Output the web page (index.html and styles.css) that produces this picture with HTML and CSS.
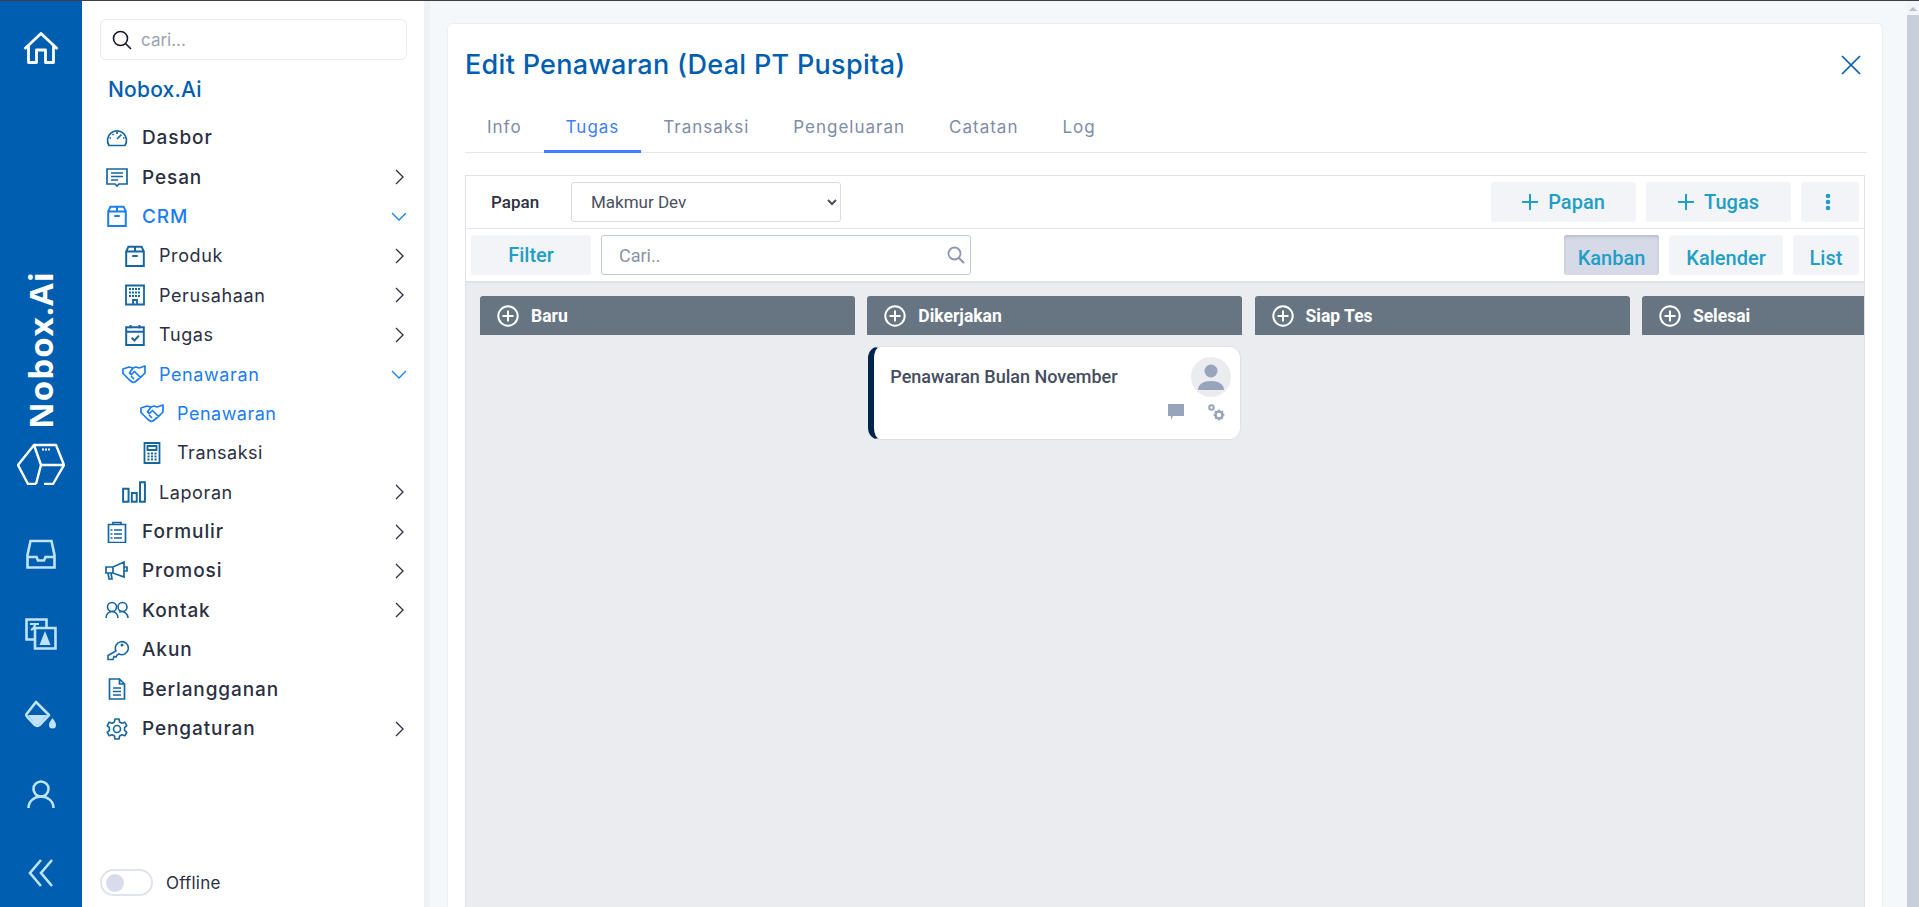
FILE: index.html
```html
<!DOCTYPE html>
<html>
  <head>
    <title>Edit Penawaran</title>
    <link rel="stylesheet" href="styles.css">
  </head>
  <body>
    <svg class="defs" width="0" height="0">
      <symbol id="i-right" viewBox="0 0 10 16"><path d="M2 1l7 7-7 7" fill="none" stroke="currentColor" stroke-width="1.300"/></symbol>
      <symbol id="i-down" viewBox="0 0 16 10"><path d="M1 2l7 7 7-7" fill="none" stroke="currentColor" stroke-width="1.300"/></symbol>
      <symbol id="i-box" viewBox="0 0 20 20"><path d="M2 6h16v13H2zM2 6l2-4.500h12L18 6M10 1.500V6M7.500 10h5" fill="none" stroke="currentColor" stroke-width="1.800"/></symbol>
      <symbol id="i-hand" viewBox="0 0 24 20"><path d="M1 5l6-2 4 1 3-1 3 1 6-2v7l-3 3-7 6-2 .5-3-2-4-4-3-3zM11 4L7.500 9l2 1.500 3-3 6 6M9 12l3 3" fill="none" stroke="currentColor" stroke-width="1.700" stroke-linejoin="round"/></symbol>
      <symbol id="i-plus" viewBox="0 0 22 22"><circle cx="11" cy="11" r="9.700" fill="none" stroke="#fff" stroke-width="2"/><path d="M5.500 11h11M11 5.500v11" stroke="#fff" stroke-width="2"/></symbol>
      <symbol id="i-add" viewBox="0 0 16 16"><path d="M0 8h16M8 0v16" stroke="currentColor" stroke-width="2"/></symbol>
    </svg>

    <div class="app">
      <aside class="rail">
        <svg class="rail-home" width="36" height="32" viewBox="0 0 36 32"><path d="M1.500 17L18 1.500 34.500 17M5.500 13.500V30.500H13.500V18h9v12.500h8V13.500" fill="none" stroke="#fff" stroke-width="2.800" stroke-linejoin="round"/></svg>
        <div class="rail-brand">Nobox.Ai</div>
        <svg class="rail-cube" width="48" height="42" viewBox="0 0 48 42"><path d="M17 2H39L47 22 36 41H27M19 41H11L1 22 17 2 24 22H47M24 22L19 41" fill="none" stroke="#fff" stroke-width="2.400" stroke-linejoin="round"/><path d="M25 6.500h9" stroke="#fff" stroke-width="2" stroke-dasharray="2 1"/></svg>
        <svg class="rail-icon rail-tray" width="30" height="30" viewBox="0 0 30 30"><path d="M4.500 2h21l3 14v12.500h-27V16zM1.500 18h9l1.500 3.500h6l1.500-3.500h9" fill="none" stroke="#bfe3fb" stroke-width="2.600"/></svg>
        <svg class="rail-icon" width="32" height="32" viewBox="0 0 32 32"><path d="M1.500 1.500h20v20h-20z" fill="none" stroke="#bfe3fb" stroke-width="2.600"/><path d="M10 10h20.500v20.500H10z" fill="#005eb0" stroke="#bfe3fb" stroke-width="2.600"/><path d="M5 6h9M10 6c0 3-2 5-4 6" fill="none" stroke="#bfe3fb" stroke-width="2.200"/><path d="M20 13l5.500 14h-11z" fill="#bfe3fb"/></svg>
        <svg class="rail-icon" width="32" height="32" viewBox="0 0 32 32"><path d="M11 3L24 16 14.500 26a3 3 0 0 1-4.500 0L2 17.500a2 2 0 0 1 0-3z" fill="none" stroke="#bfe3fb" stroke-width="2.600" stroke-linejoin="round"/><path d="M3 16h19l-8 9a3 3 0 0 1-4 0z" fill="#bfe3fb"/><path d="M27.500 19c2 3 3.500 4.500 3.500 7a3.500 3.500 0 0 1-7 0c0-2.500 1.500-4 3.500-7z" fill="#bfe3fb"/></svg>
        <svg class="rail-icon" width="28" height="30" viewBox="0 0 28 30"><circle cx="14" cy="9" r="7.500" fill="none" stroke="#bfe3fb" stroke-width="2.600"/><path d="M1.500 28c0-7 6-11.500 12.500-11.500S26.500 21 26.500 28" fill="none" stroke="#bfe3fb" stroke-width="2.600"/></svg>
        <svg class="rail-icon" width="26" height="28" viewBox="0 0 26 28"><path d="M13 1L2 14l11 13M24 1L13 14l11 13" fill="none" stroke="#bfe3fb" stroke-width="2.600"/></svg>
      </aside>

      <nav class="side">
        <div class="side-search">
          <svg width="20" height="20" viewBox="0 0 20 20"><circle cx="8.500" cy="8.500" r="7" fill="none" stroke="#111827" stroke-width="1.600"/><path d="M13.500 13.500L19 19" stroke="#111827" stroke-width="1.600"/></svg>
          <span>cari...</span>
        </div>
        <div class="side-title">Nobox.Ai</div>

        <ul class="menu">
          <li class="item">
            <svg class="ico" viewBox="0 0 22 22"><path d="M3 18.500a9.500 9.500 0 1 1 16 0zM11 5v2M5 11H3.500M18.500 11H17M6.500 7l1 1M15.500 7.500L11 12" fill="none" stroke="currentColor" stroke-width="1.700"/></svg>
            <span>Dasbor</span>
          </li>
          <li class="item">
            <svg class="ico" viewBox="0 0 22 22"><path d="M1 3h20v15h-8l-2 2-2-2H1zM5 7h12M5 10.500h12M5 14h7" fill="none" stroke="currentColor" stroke-width="1.700"/></svg>
            <span>Pesan</span>
            <svg class="arrow"><use href="#i-right"/></svg>
          </li>
          <li class="item on">
            <svg class="ico"><use href="#i-box"/></svg>
            <span>CRM</span>
            <svg class="arrow-down"><use href="#i-down"/></svg>
          </li>
          <li class="item sub">
            <svg class="ico"><use href="#i-box"/></svg>
            <span>Produk</span>
            <svg class="arrow"><use href="#i-right"/></svg>
          </li>
          <li class="item sub">
            <svg class="ico" viewBox="0 0 22 22"><path d="M2 1.500h18v19H2zM9 20.500V16h4v4.500" fill="none" stroke="currentColor" stroke-width="1.800"/><path d="M5 5h12M5 8.500h12M5 12h12" stroke="currentColor" stroke-width="2" stroke-dasharray="2 1"/></svg>
            <span>Perusahaan</span>
            <svg class="arrow"><use href="#i-right"/></svg>
          </li>
          <li class="item sub">
            <svg class="ico" viewBox="0 0 20 20"><path d="M2 3h16v16H2zM2 7h16M6 1v3M14 1v3M7 12.500l2.500 2.500 4-4.500" fill="none" stroke="currentColor" stroke-width="1.800"/></svg>
            <span>Tugas</span>
            <svg class="arrow"><use href="#i-right"/></svg>
          </li>
          <li class="item sub on">
            <svg class="ico wide"><use href="#i-hand"/></svg>
            <span>Penawaran</span>
            <svg class="arrow-down"><use href="#i-down"/></svg>
          </li>
          <li class="item subsub on">
            <svg class="ico wide"><use href="#i-hand"/></svg>
            <span>Penawaran</span>
          </li>
          <li class="item subsub">
            <svg class="ico" viewBox="0 0 20 22"><path d="M2.500 1h15v20h-15zM5.500 4h9v4h-9z" fill="none" stroke="currentColor" stroke-width="1.800"/><path d="M5.500 11.500h9M5.500 14.500h9M5.500 17.500h9" stroke="currentColor" stroke-width="2" stroke-dasharray="2 1.500"/></svg>
            <span>Transaksi</span>
          </li>
          <li class="item sub">
            <svg class="ico wide" viewBox="0 0 22 20"><path d="M1 7h5v12H1zM9 11h4.500v8H9zM16.500 1H21v18h-4.500z" fill="none" stroke="currentColor" stroke-width="1.800"/></svg>
            <span>Laporan</span>
            <svg class="arrow"><use href="#i-right"/></svg>
          </li>
          <li class="item">
            <svg class="ico" viewBox="0 0 20 22"><path d="M1.500 3.500h17v18h-17zM6 3.500V1.500h8v2h-8zM7 9h8M7 13h8M7 17h8" fill="none" stroke="currentColor" stroke-width="1.700"/><path d="M3.500 9h2M3.500 13h2M3.500 17h2" stroke="currentColor" stroke-width="1.700"/></svg>
            <span>Formulir</span>
            <svg class="arrow"><use href="#i-right"/></svg>
          </li>
          <li class="item">
            <svg class="ico wide" viewBox="0 0 24 20"><path d="M1 6h7l11-5v15L8 12H1zM8 6v6M3 12l1 6h3l-1-6M19 6h3v4h-3" fill="none" stroke="currentColor" stroke-width="1.700"/></svg>
            <span>Promosi</span>
            <svg class="arrow"><use href="#i-right"/></svg>
          </li>
          <li class="item">
            <svg class="ico wide" viewBox="0 0 24 18"><circle cx="7" cy="6" r="4.500" fill="none" stroke="currentColor" stroke-width="1.600"/><circle cx="17.500" cy="6" r="4.500" fill="none" stroke="currentColor" stroke-width="1.600"/><path d="M1 17c0-4 3-6.500 6-6.500s6 2.500 6 6.500M14 11c4-1.500 9 1 9 6" fill="none" stroke="currentColor" stroke-width="1.600"/></svg>
            <span>Kontak</span>
            <svg class="arrow"><use href="#i-right"/></svg>
          </li>
          <li class="item">
            <svg class="ico wide" viewBox="0 0 22 22"><path d="M10 12a6.500 6.500 0 1 1 3 3l-2 1-1 2-2-.5-1 3H2v-4z" fill="none" stroke="currentColor" stroke-width="1.600"/><circle cx="16" cy="6" r="1.500" fill="currentColor"/></svg>
            <span>Akun</span>
          </li>
          <li class="item">
            <svg class="ico" viewBox="0 0 20 22"><path d="M2.500 1h10l5 5v15h-15zM12.500 1v5h5M6 10h8M6 13.500h8M6 17h8" fill="none" stroke="currentColor" stroke-width="1.700"/></svg>
            <span>Berlangganan</span>
          </li>
          <li class="item">
            <svg class="ico" viewBox="0 0 22 22"><circle cx="11" cy="11" r="3.500" fill="none" stroke="currentColor" stroke-width="1.600"/><path d="M9 1h4l.6 3 2.400 1.200 2.800-1 2 3.400-2.200 2 0 2.800 2.200 2-2 3.400-2.800-1-2.400 1.200-.6 3H9l-.6-3L6 16.800l-2.800 1-2-3.400 2.200-2v-2.800l-2.200-2 2-3.400 2.800 1L8.400 4z" fill="none" stroke="currentColor" stroke-width="1.600" stroke-linejoin="round"/></svg>
            <span>Pengaturan</span>
            <svg class="arrow"><use href="#i-right"/></svg>
          </li>
        </ul>

        <div class="status">
          <div class="switch"><i></i></div>
          <span>Offline</span>
        </div>
      </nav>

      <main class="main">
        <section class="panel">
          <header class="panel-head">
            <h1>Edit Penawaran (Deal PT Puspita)</h1>
            <svg width="20" height="20" viewBox="0 0 20 20"><path d="M1 1l18 18M19 1L1 19" stroke="#005eb0" stroke-width="1.700"/></svg>
          </header>

          <div class="tabs">
            <a>Info</a>
            <a class="active">Tugas</a>
            <a>Transaksi</a>
            <a>Pengeluaran</a>
            <a>Catatan</a>
            <a>Log</a>
          </div>

          <div class="board">
            <div class="bar">
              <label>Papan</label>
              <select><option>Makmur Dev</option></select>
              <div class="bar-right">
                <button class="btn btn-add"><svg><use href="#i-add"/></svg>Papan</button>
                <button class="btn btn-add"><svg><use href="#i-add"/></svg>Tugas</button>
                <button class="btn btn-more"><svg width="6" height="18" viewBox="0 0 6 18"><circle cx="3" cy="3" r="2.300"/><circle cx="3" cy="9" r="2.300"/><circle cx="3" cy="15" r="2.300"/></svg></button>
              </div>
            </div>
            <div class="bar bar-second">
              <button class="btn btn-filter">Filter</button>
              <div class="find">
                <span>Cari..</span>
                <svg width="18" height="18" viewBox="0 0 18 18"><circle cx="7.500" cy="7.500" r="6" fill="none" stroke="#8d99ae" stroke-width="1.800"/><path d="M12 12l5 5" stroke="#8d99ae" stroke-width="2.200"/></svg>
              </div>
              <div class="bar-right">
                <button class="btn btn-view selected">Kanban</button>
                <button class="btn btn-view">Kalender</button>
                <button class="btn btn-view">List</button>
              </div>
            </div>

            <div class="columns">
              <div class="col">
                <div class="col-head"><svg><use href="#i-plus"/></svg>Baru</div>
              </div>
              <div class="col">
                <div class="col-head"><svg><use href="#i-plus"/></svg>Dikerjakan</div>
                <div class="card">
                  <div class="card-title">Penawaran Bulan November</div>
                  <div class="avatar"><svg width="28" height="28" viewBox="0 0 28 28"><circle cx="14" cy="8" r="6.500"/><path d="M1 27c0-6 6-9 13-9s13 3 13 9z"/></svg></div>
                  <div class="card-icons">
                    <svg width="18" height="18" viewBox="0 0 18 18"><path d="M1 1h16v12H6l-2 4v-4H1z"/></svg>
                    <svg width="18" height="18" viewBox="0 0 18 18"><circle cx="4.500" cy="4.500" r="2.300" fill="none" stroke="#98a4bb" stroke-width="2"/><circle cx="12" cy="12" r="3.500" fill="none" stroke="#98a4bb" stroke-width="2.600"/><path d="M12 6.500v11M6.500 12h11M8 8l8 8M16 8l-8 8" stroke="#98a4bb" stroke-width="1.600" stroke-dasharray="2.200 6.500"/></svg>
                  </div>
                </div>
              </div>
              <div class="col">
                <div class="col-head"><svg><use href="#i-plus"/></svg>Siap Tes</div>
              </div>
              <div class="col">
                <div class="col-head"><svg><use href="#i-plus"/></svg>Selesai</div>
              </div>
            </div>
          </div>
        </section>
      </main>

      <div class="scroll"><b></b><i></i></div>
    </div>
  </body>
</html>
```

FILE: styles.css
```css
* {
  box-sizing: border-box;
}

html,
body {
  height: 100%;
  margin: 0;
  overflow: hidden;
}

body {
  font-family: "Inter", "Liberation Sans", sans-serif;
  color: #2d3142;
  background-color: #f4f8fb;
  border-top: 1px solid #3c4043;
}

.defs {
  position: absolute;
}

.app {
  display: flex;
  height: 100%;
}

/* left rail */
.rail {
  flex: 0 0 82px;
  display: flex;
  flex-direction: column;
  align-items: center;
  background-color: #005eb0;
  padding-top: 31px;
}

.rail-brand {
  writing-mode: vertical-rl;
  transform: rotate(180deg);
  margin-top: 208px;
  height: 157px;
  color: #fff;
  font-family: "Open Sans", sans-serif;
  font-size: 33px;
  font-weight: 700;
  line-height: 36px;
  letter-spacing: 1px;
  white-space: nowrap;
}

.rail-cube {
  margin-top: 14px;
}

.rail-icon {
  margin-top: 49px;
}

.rail-tray {
  margin-top: 54px;
}

/* sidebar */
.side {
  flex: 0 0 342px;
  display: flex;
  flex-direction: column;
  padding: 18px 17px 0 18px;
  background-color: #fff;
  box-shadow: 0 0 0 6px #eef1f7;
  clip-path: inset(0 -6px 0 0);
}

.side-search {
  display: flex;
  align-items: center;
  gap: 9px;
  height: 41px;
  padding-left: 11px;
  border: 1px solid #e8eaee;
  border-radius: 6px;
  font-size: 17px;
  color: #9aa3b2;
}

.side-title {
  margin: 16px 0 0 8px;
  font-size: 21px;
  line-height: 28px;
  font-weight: 500;
  letter-spacing: 0.2px;
  color: #005eb0;
}

.menu {
  list-style: none;
  margin: 14px 0 0;
  padding: 0;
}

.item {
  display: flex;
  align-items: center;
  height: 39.400px;
  font-size: 19px;
  font-weight: 500;
  color: #2b2f42;
  letter-spacing: 0.9px;
}

.item .ico {
  flex: none;
  width: 22px;
  height: 22px;
  margin: 0 14px 0 6px;
  color: #15669f;
}

.item .ico.wide {
  width: 24px;
  margin: 0 13px 0 5px;
}

.item span {
  flex: 1;
}

.sub {
  padding-left: 17px;
  font-size: 18px;
  font-weight: 400;
  letter-spacing: 0.6px;
}

.sub .ico {
  margin: 0 13px 0 7px;
}

.subsub {
  padding-left: 35px;
  font-size: 18px;
  font-weight: 400;
  letter-spacing: 0.5px;
}

.item.on,
.item.on .ico {
  color: #1a7df0;
}

.arrow {
  flex: none;
  width: 10px;
  height: 16px;
  margin-right: 3px;
  color: #2b2f42;
}

.arrow-down {
  flex: none;
  width: 16px;
  height: 10px;
  color: #1a7df0;
}

.status {
  display: flex;
  align-items: center;
  gap: 13px;
  margin-top: auto;
  margin-bottom: 11px;
  font-size: 17px;
  letter-spacing: 0.2px;
  color: #2b2f42;
}

.switch {
  width: 53px;
  height: 27px;
  padding: 3px;
  border: 2px solid #dfe3ef;
  border-radius: 14px;
}

.switch i {
  display: block;
  width: 18px;
  height: 18px;
  margin-left: 1px;
  background-color: #d8dcea;
  border-radius: 50%;
}

/* main panel */
.main {
  flex: 1;
  min-width: 0;
  padding: 22px 24px 0 23px;
}

.panel {
  height: 100%;
  padding: 0 17px;
  background-color: #fff;
  border: 1px solid #ebeff4;
  border-bottom: 0;
  border-radius: 6px 6px 0 0;
}

.panel-head {
  display: flex;
  align-items: center;
  justify-content: space-between;
  height: 79px;
  padding: 3px 4px 0 0;
}

.panel-head h1 {
  margin: 0;
  font-size: 27px;
  line-height: 36px;
  font-weight: 500;
  letter-spacing: 0.3px;
  color: #005eb0;
}

.tabs {
  display: flex;
  height: 50px;
  margin-right: -2px;
  border-bottom: 1px solid #e4e6ec;
}

.tabs a {
  padding: 12px 22px 0;
  font-size: 17px;
  line-height: 24px;
  letter-spacing: 1px;
  color: #7f8ba8;
}

.tabs a.active {
  color: #3f7dff;
  border-bottom: 3px solid #3f7dff;
  margin-bottom: -1px;
}

.board {
  display: flex;
  flex-direction: column;
  height: 740px;
  margin-top: 22px;
  border: 1px solid #e0e2e8;
  overflow: hidden;
}

.bar {
  display: flex;
  align-items: center;
  flex: 0 0 53px;
  padding: 0 5px;
  border-bottom: 1px solid #e0e2e8;
  font-family: "Roboto", sans-serif;
}

.bar label {
  width: 100px;
  padding-left: 20px;
  font-size: 17px;
  font-weight: 500;
  color: #2d3142;
}

.bar select {
  width: 270px;
  height: 40px;
  padding-left: 15px;
  background-color: #fff;
  border: 1px solid #d8dbe2;
  border-radius: 3px;
  font-family: "Roboto", sans-serif;
  font-size: 17px;
  color: #4a5060;
}

.bar-right {
  display: flex;
  gap: 10px;
  margin-left: auto;
}

.bar-second {
  flex: 0 0 54px;
  border-bottom: 2px solid #e0e2e8;
}

.btn {
  height: 40px;
  padding: 0;
  background-color: #f3f4f8;
  border: 0;
  border-radius: 3px;
  font-family: "Roboto", sans-serif;
  font-size: 20px;
  font-weight: 500;
  color: #1f9ec6;
}

.btn-add {
  display: flex;
  align-items: center;
  justify-content: center;
  gap: 10px;
  width: 145px;
}

.btn-add svg {
  width: 16px;
  height: 16px;
}

.btn-more {
  display: flex;
  align-items: center;
  justify-content: center;
  width: 58px;
  padding-right: 4px;
}

.btn-more svg {
  fill: #1f9ec6;
}

.btn-filter {
  width: 120px;
}

.find {
  display: flex;
  align-items: center;
  justify-content: space-between;
  width: 370px;
  height: 40px;
  margin-left: 10px;
  padding: 0 5px 0 17px;
  border: 1px solid #bcc9da;
  border-radius: 3px;
  font-size: 18px;
  color: #8b94a3;
}

.btn-view {
  padding-top: 6px;
}

.btn-view:nth-child(1) {
  width: 95px;
}

.btn-view:nth-child(2) {
  width: 114px;
}

.btn-view:nth-child(3) {
  width: 66px;
}

.btn.selected {
  background-color: #d6dae8;
  box-shadow: inset 0 2px 3px #b8bccb;
}

/* kanban */
.columns {
  display: flex;
  flex: 1;
  gap: 12.300px;
  padding: 13px 0 0 14px;
  background-color: #ebecf0;
  font-family: "Roboto", sans-serif;
}

.col {
  flex: 0 0 375px;
}

.col-head {
  display: flex;
  align-items: center;
  gap: 12px;
  height: 39px;
  padding-left: 17px;
  background-color: #677583;
  border-radius: 3px 3px 0 0;
  font-size: 17.500px;
  font-weight: 700;
  color: #fff;
}

.col-head svg {
  width: 22px;
  height: 22px;
}

.card {
  position: relative;
  height: 94px;
  margin: 11px 1px 0 1px;
  padding: 19px 0 0 16px;
  background-color: #fff;
  border: 1px solid #dfe1e7;
  border-left: 6px solid #02264b;
  border-radius: 12px;
}

.card-title {
  font-size: 18px;
  font-weight: 500;
  color: #454d60;
}

.avatar {
  position: absolute;
  top: 10px;
  right: 9px;
  display: flex;
  align-items: center;
  justify-content: center;
  width: 40px;
  height: 40px;
  background-color: #ebecf0;
  border-radius: 50%;
}

.avatar svg {
  fill: #98a4bb;
}

.card-icons {
  position: absolute;
  top: 56px;
  right: 15px;
  display: flex;
  gap: 22px;
  fill: #98a4bb;
}

.scroll {
  display: flex;
  flex-direction: column;
  align-items: center;
  flex: 0 0 12px;
  padding-top: 6px;
  background-color: #f1f4f8;
}

.scroll b {
  flex: none;
  width: 0;
  height: 0;
  margin-bottom: 4px;
  border: 4px solid transparent;
  border-top: 0;
  border-bottom: 4px solid #b9c0cc;
}

.scroll i {
  display: block;
  flex: 1;
  width: 100%;
  background-color: #c8cfda;
}
```
